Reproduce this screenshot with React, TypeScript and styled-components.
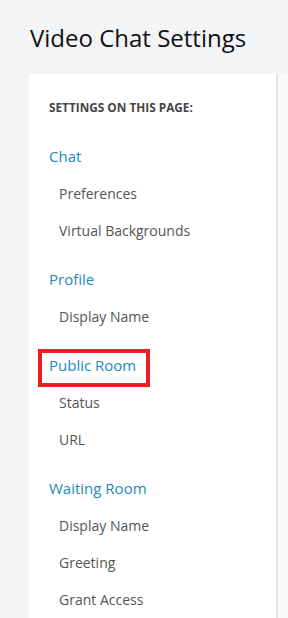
import React from "react";
import styled, { createGlobalStyle } from "styled-components";

const Global = createGlobalStyle`
  html, body { margin: 0; padding: 0; background: #f3f4f6; }
  body { font-family: "Open Sans", "Liberation Sans", sans-serif; }
`;

const Page = styled.div`
  width: 288px;
  height: 618px;
  overflow: hidden;
  background: #f3f4f6;
  display: flex;
  flex-direction: column;
`;

const Title = styled.h1`
  margin: 0;
  padding: 22px 0 0 30px;
  height: 74px;
  flex-shrink: 0;
  box-sizing: border-box;
  font-size: 24px;
  font-weight: 400;
  line-height: 32px;
  color: #111;
`;

const Body = styled.div`
  display: flex;
  flex: 1;
`;

const Sidebar = styled.nav`
  margin-left: 29px;
  width: 249px;
  background: #fff;
  border-right: 2px solid #e3e4e6;
  padding: 23px 0 0 20px;
  box-sizing: border-box;
`;

const Rest = styled.div`
  flex: 1;
  background: #f9f9fa;
`;

const Heading = styled.div`
  font-size: 11.8px;
  font-weight: 700;
  color: #444;
  line-height: 20px;
  margin-bottom: 28px;
`;

const Group = styled.div`
  margin-bottom: 10px;
`;

const GroupLink = styled.a<{ $highlight?: boolean }>`
  display: inline-block;
  font-size: 15px;
  color: #1d8abc;
  text-decoration: none;
  line-height: 22px;
  position: relative;
  &::after {
    content: "";
    display: ${(p) => (p.$highlight ? "block" : "none")};
    position: absolute;
    left: -11px;
    top: -5px;
    width: 112px;
    height: 38px;
    border: 4px solid #ec1c24;
    box-sizing: border-box;
  }
`;

const GroupTitleRow = styled.div`
  height: 22px;
  margin-bottom: 17px;
`;

const SubItem = styled.div`
  font-size: 14px;
  color: #555;
  padding-left: 10px;
  height: 37px;
  line-height: 20px;
`;

const groups: { title: string; items: string[]; highlight?: boolean }[] = [
  { title: "Chat", items: ["Preferences", "Virtual Backgrounds"] },
  { title: "Profile", items: ["Display Name"] },
  { title: "Public Room", items: ["Status", "URL"], highlight: true },
  { title: "Waiting Room", items: ["Display Name", "Greeting", "Grant Access"] },
];

export default function App() {
  return (
    <Page>
      <Global />
      <Title>Video Chat Settings</Title>
      <Body>
        <Sidebar>
          <Heading>SETTINGS ON THIS PAGE:</Heading>
          {groups.map((g) => (
            <Group key={g.title}>
              <GroupTitleRow>
                <GroupLink href="#" $highlight={g.highlight}>
                  {g.title}
                </GroupLink>
              </GroupTitleRow>
              {g.items.map((i) => (
                <SubItem key={i}>{i}</SubItem>
              ))}
            </Group>
          ))}
        </Sidebar>
        <Rest />
      </Body>
    </Page>
  );
}
